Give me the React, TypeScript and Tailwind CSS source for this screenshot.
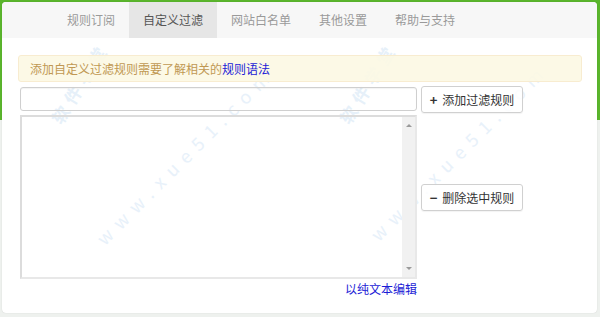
import React from "react";

const font = { fontFamily: '"Noto Sans CJK SC", "Liberation Sans", sans-serif' };

export default function App() {
  const tabs = ["规则订阅", "自定义过滤", "网站白名单", "其他设置", "帮助与支持"];
  return (
    <div
      className="relative w-[600px] h-[317px] overflow-hidden bg-[linear-gradient(to_bottom,#5ab52c_0,#5ab52c_120px,#eef1ee_120px)] pt-[2px] pl-[2px]"
      style={font}
    >
      <div className="relative w-[595px] h-[311px] bg-white rounded-[4px] overflow-hidden shadow-[0_0_1px_rgba(0,0,0,0.2)]">
        {/* nav */}
        <div className="h-[36px] bg-[#f7f7f7] flex pl-[51px]">
          {tabs.map((t, i) => (
            <div
              key={t}
              className={
                "px-[14px] h-full flex items-center text-[12px] " +
                (i === 1 ? "bg-[#e6e6e6] text-[#555]" : "text-[#9a9a9a]")
              }
            >
              {t}
            </div>
          ))}
        </div>

        {/* watermarks */}
        <div className="pointer-events-none absolute left-[32px] top-[68px] -rotate-[58deg] text-[17px] font-bold tracking-[6px] text-[#e6f0f9]">
          软件学堂
        </div>
        <div className="pointer-events-none absolute left-[62px] top-[140px] -rotate-[45deg] text-[18px] tracking-[8px] text-[#e8f1fa]">
          www.xue51.com
        </div>
        <div className="pointer-events-none absolute left-[320px] top-[68px] -rotate-[58deg] text-[17px] font-bold tracking-[6px] text-[#e6f0f9]">
          软件学堂
        </div>
        <div className="pointer-events-none absolute left-[336px] top-[136px] -rotate-[45deg] text-[18px] tracking-[8px] text-[#e8f1fa]">
          www.xue51.com
        </div>

        <div className="relative pl-[16px] pr-[15px] pt-[17px]">
          {/* alert */}
          <div className="h-[27px] bg-[#fcf8e3]/90 border border-[#f8ecd0] rounded-[3px] flex items-center pl-[11px] text-[12px] text-[#c09853]">
            添加自定义过滤规则需要了解相关的<span className="text-[#1c1cd6]">规则语法</span>
          </div>

          <div className="flex mt-[4px] pl-[2px]">
            <div className="flex flex-col w-[397px]">
              <div className="h-[24px] mt-[1px] border border-[#cfcfcf] rounded-[3px] shadow-[inset_0_1px_1px_rgba(0,0,0,0.05)]" />
              <div className="mt-[4px] h-[164px] border-2 border-[#dcdcdc] border-r-[#e8e8e8] border-b-[#e8e8e8] flex justify-end">
                <div className="w-[13px] h-full bg-[#f1f1f1] flex flex-col items-center justify-between py-[7px]">
                  <div className="w-0 h-0 border-l-[3px] border-r-[3px] border-b-[3px] border-l-transparent border-r-transparent border-b-[#9a9a9a]" />
                  <div className="w-0 h-0 border-l-[3px] border-r-[3px] border-t-[3px] border-l-transparent border-r-transparent border-t-[#9a9a9a]" />
                </div>
              </div>
              <div className="flex justify-end mt-[2px]">
                <span className="text-[12px] text-[#1c1cd6] leading-[16px]">以纯文本编辑</span>
              </div>
            </div>
            <div className="flex flex-col ml-[4px]">
              <button className="w-[102px] h-[27px] border border-[#d0d0d0] rounded-[3px] bg-white/85 flex items-center justify-center text-[12px] text-[#333] shadow-[0_1px_1px_rgba(0,0,0,0.05)]">
                <span className="font-bold mr-[5px] text-[13px]">+</span>添加过滤规则
              </button>
              <button className="mt-[71px] w-[102px] h-[27px] border border-[#d0d0d0] rounded-[3px] bg-white/85 flex items-center justify-center text-[12px] text-[#333] shadow-[0_1px_1px_rgba(0,0,0,0.05)]">
                <span className="font-bold mr-[5px] text-[13px]">−</span>删除选中规则
              </button>
            </div>
          </div>
        </div>
      </div>
    </div>
  );
}
